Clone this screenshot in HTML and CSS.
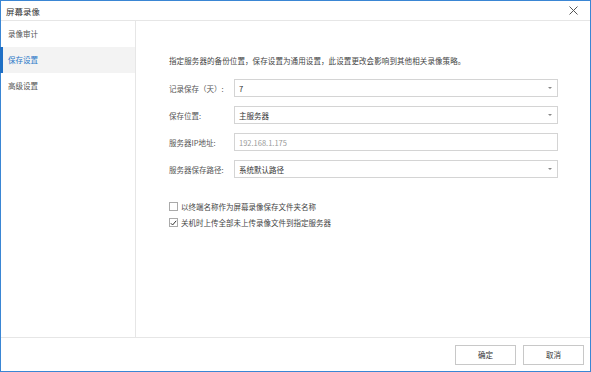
FILE: index.html
```html
<!DOCTYPE html>
<html lang="zh-CN">
<head>
  <meta charset="UTF-8" />
  <title>屏幕录像</title>
  <link rel="stylesheet" href="styles.css">
</head>
<body>
  <div class="window">
    <div class="titlebar">
      <span class="title">屏幕录像</span>
      <svg class="close" width="9" height="9" viewBox="0 0 9 9">
        <path d="M0.5 0.5 L8.5 8.5 M8.5 0.5 L0.5 8.5" stroke="#555" stroke-width="1" fill="none"/>
      </svg>
    </div>

    <div class="main">
      <ul class="sidebar">
        <li>录像审计</li>
        <li class="active">保存设置</li>
        <li>高级设置</li>
      </ul>

      <div class="content">
        <p class="desc">指定服务器的备份位置，保存设置为通用设置，此设置更改会影响到其他相关录像策略。</p>

        <div class="form">
          <div class="row">
            <label>记录保存（天）:</label>
            <div class="field select"><span>7</span><i class="arrow"></i></div>
          </div>
          <div class="row">
            <label>保存位置:</label>
            <div class="field select"><span>主服务器</span><i class="arrow"></i></div>
          </div>
          <div class="row">
            <label>服务器IP地址:</label>
            <div class="field disabled"><span>192.168.1.175</span></div>
          </div>
          <div class="row">
            <label>服务器保存路径:</label>
            <div class="field select"><span>系统默认路径</span><i class="arrow"></i></div>
          </div>
        </div>

        <div class="checks">
          <div class="check"><span class="box"></span>以终端名称作为屏幕录像保存文件夹名称</div>
          <div class="check"><span class="box checked">
            <svg width="7" height="6" viewBox="0 0 7 6"><path d="M0.8 3.2 L2.6 5 L6.2 0.8" stroke="#333" stroke-width="1" fill="none"/></svg>
          </span>关机时上传全部未上传录像文件到指定服务器</div>
        </div>
      </div>
    </div>

    <div class="footer">
      <button>确定</button>
      <button>取消</button>
    </div>
  </div>
</body>
</html>
```

FILE: styles.css
```css
* {
  margin: 0;
  padding: 0;
  box-sizing: border-box;
}

body {
  font-family: "Noto Sans CJK SC", "Noto Sans", sans-serif;
  font-size: 7.5px;
  color: #444;
  background: #fff;
}

.window {
  width: 591px;
  height: 372px;
  border: 1px solid #3a86d4;
  display: flex;
  flex-direction: column;
  background: #fff;
}

.titlebar {
  height: 20px;
  border-bottom: 1px solid #e6e6e6;
  display: flex;
  align-items: center;
  justify-content: space-between;
  padding: 0 12px 0 5px;
  flex-shrink: 0;
}

.title {
  font-size: 8.5px;
  color: #333;
}

.main {
  flex: 1;
  display: flex;
}

.sidebar {
  list-style: none;
  width: 135px;
  border-right: 1px solid #e6e6e6;
  flex-shrink: 0;
}

.sidebar li {
  height: 26px;
  line-height: 26px;
  padding-left: 5px;
  color: #555;
  border-left: 3px solid transparent;
  margin-left: -1px;
}

.sidebar li.active {
  background: #f3f3f3;
  border-left-color: #1f6fc5;
  color: #2a78c8;
}

.content {
  flex: 1;
  padding: 34px 0 0 33px;
}

.desc {
  color: #444;
  margin-bottom: 13px;
  letter-spacing: 0.1px;
}

.form {
  display: flex;
  flex-direction: column;
  gap: 9px;
}

.row {
  display: flex;
  align-items: center;
}

.row label {
  width: 65px;
  color: #555;
}

.field {
  width: 324px;
  height: 18px;
  border: 1px solid #d4d4d4;
  display: flex;
  align-items: center;
  justify-content: space-between;
  padding: 0 5px 0 4px;
  color: #333;
}

.field.disabled {
  color: #999;
}

.arrow {
  width: 0;
  height: 0;
  border-left: 2px solid transparent;
  border-right: 2px solid transparent;
  border-top: 2px solid #888;
}

.checks {
  margin-top: 23px;
  display: flex;
  flex-direction: column;
  gap: 5px;
}

.check {
  display: flex;
  align-items: center;
  color: #444;
}

.box {
  width: 9px;
  height: 9px;
  border: 1px solid #aaa;
  margin-right: 3px;
  display: flex;
  align-items: center;
  justify-content: center;
  background: #fff;
}

.footer {
  height: 34px;
  border-top: 1px solid #e6e6e6;
  display: flex;
  justify-content: flex-end;
  align-items: center;
  gap: 7px;
  padding-right: 6px;
  flex-shrink: 0;
}

.footer button {
  width: 61px;
  height: 20px;
  border: 1px solid #c8c8c8;
  background: #fff;
  font-family: inherit;
  font-size: 7.5px;
  color: #333;
}
```
